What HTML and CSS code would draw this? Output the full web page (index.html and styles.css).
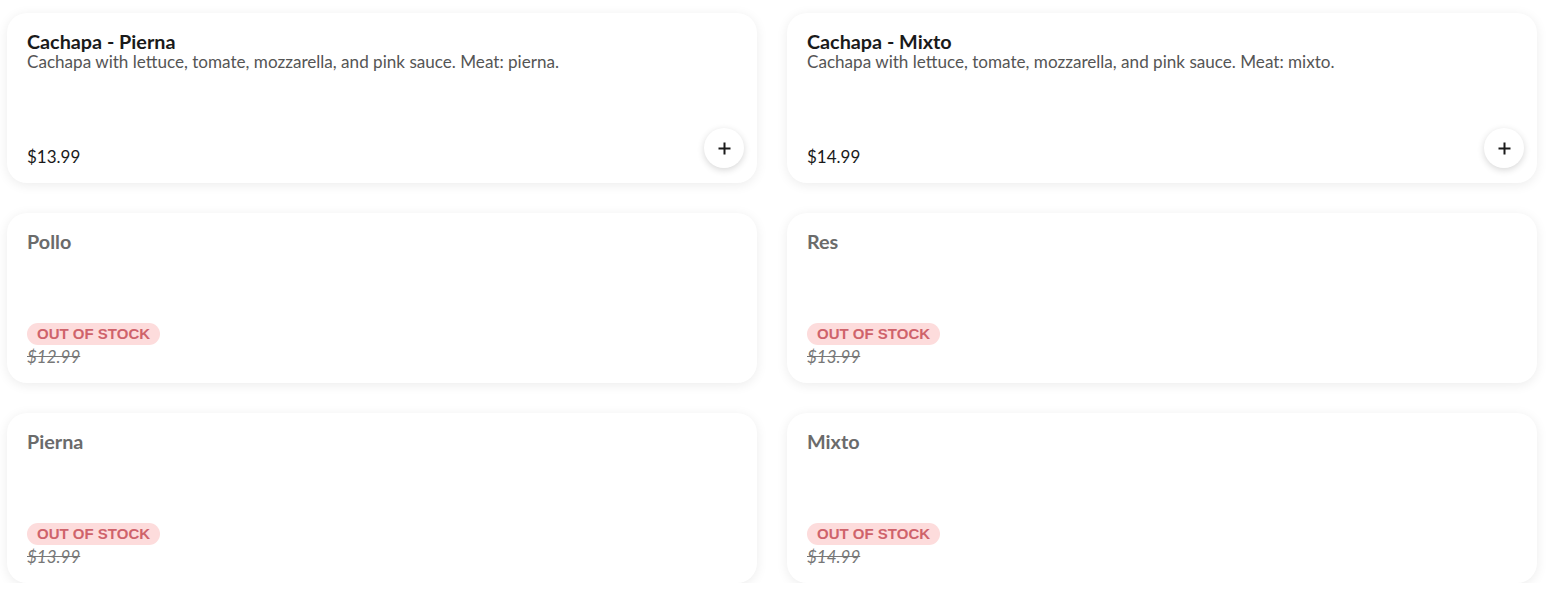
FILE: index.html
```html
<!DOCTYPE html>
<html>
<head>
<meta charset="utf-8">
<link rel="stylesheet" href="styles.css">
</head>
<body>
<div class="grid">
  <div class="card">
    <div class="info">
      <div class="title">Cachapa - Pierna</div>
      <div class="desc">Cachapa with lettuce, tomate, mozzarella, and pink sauce. Meat: pierna.</div>
    </div>
    <div class="bottom"><div class="price">$13.99</div></div>
    <button class="add"><svg width="13" height="13" viewBox="0 0 13 13"><path d="M6.5 0.5v12M0.5 6.5h12" stroke="#1a1a1a" stroke-width="2"/></svg></button>
  </div>
  <div class="card">
    <div class="info">
      <div class="title">Cachapa - Mixto</div>
      <div class="desc">Cachapa with lettuce, tomate, mozzarella, and pink sauce. Meat: mixto.</div>
    </div>
    <div class="bottom"><div class="price">$14.99</div></div>
    <button class="add"><svg width="13" height="13" viewBox="0 0 13 13"><path d="M6.5 0.5v12M0.5 6.5h12" stroke="#1a1a1a" stroke-width="2"/></svg></button>
  </div>
  <div class="card oos">
    <div class="info"><div class="title">Pollo</div></div>
    <div class="bottom"><span class="badge">OUT OF STOCK</span><div class="price old">$12.99</div></div>
  </div>
  <div class="card oos">
    <div class="info"><div class="title">Res</div></div>
    <div class="bottom"><span class="badge">OUT OF STOCK</span><div class="price old">$13.99</div></div>
  </div>
  <div class="card oos">
    <div class="info"><div class="title">Pierna</div></div>
    <div class="bottom"><span class="badge">OUT OF STOCK</span><div class="price old">$13.99</div></div>
  </div>
  <div class="card oos">
    <div class="info"><div class="title">Mixto</div></div>
    <div class="bottom"><span class="badge">OUT OF STOCK</span><div class="price old">$14.99</div></div>
  </div>
</div>
</body>
</html>
```
FILE: styles.css
```css
html, body { margin: 0; padding: 0; background: #fff; }
body { font-family: "Lato", "Liberation Sans", sans-serif; }
.grid {
  display: grid;
  grid-template-columns: 750px 750px;
  column-gap: 30px;
  row-gap: 30px;
  padding: 13px 0 0 7px;
}
.card {
  position: relative;
  height: 170px;
  box-sizing: border-box;
  padding: 17px 20px 16px 20px;
  border-radius: 20px;
  background: #fff;
  box-shadow: 0 2px 12px rgba(0,0,0,0.08);
  display: flex;
  flex-direction: column;
  justify-content: space-between;
}
.title {
  font-size: 19.8px;
  font-weight: 700;
  color: #1a1a1a;
  line-height: 22px;
}
.desc {
  font-size: 17.1px;
  color: #555;
  line-height: 20px;
}
.price {
  font-size: 17px;
  color: #1a1a1a;
  line-height: 20px;
}
.oos .title { color: #6b6b6b; }
.badge {
  display: inline-block;
  background: #fddcdc;
  color: #cf636b;
  font-family: "Liberation Sans", Arial, sans-serif;
  font-weight: 700;
  font-size: 15px;
  line-height: 22px;
  padding: 0 10px;
  border-radius: 11px;
  margin-bottom: 2px;
}
.bottom { display: flex; flex-direction: column; align-items: flex-start; }
.price.old {
  color: #777;
  font-style: italic;
  text-decoration: line-through;
}
.add {
  position: absolute;
  right: 13px;
  bottom: 15px;
  width: 40px;
  height: 40px;
  border-radius: 50%;
  border: none;
  background: #fff;
  box-shadow: 0 2px 7px rgba(0,0,0,0.16);
  display: flex;
  align-items: center;
  justify-content: center;
  padding: 0;
}
```
